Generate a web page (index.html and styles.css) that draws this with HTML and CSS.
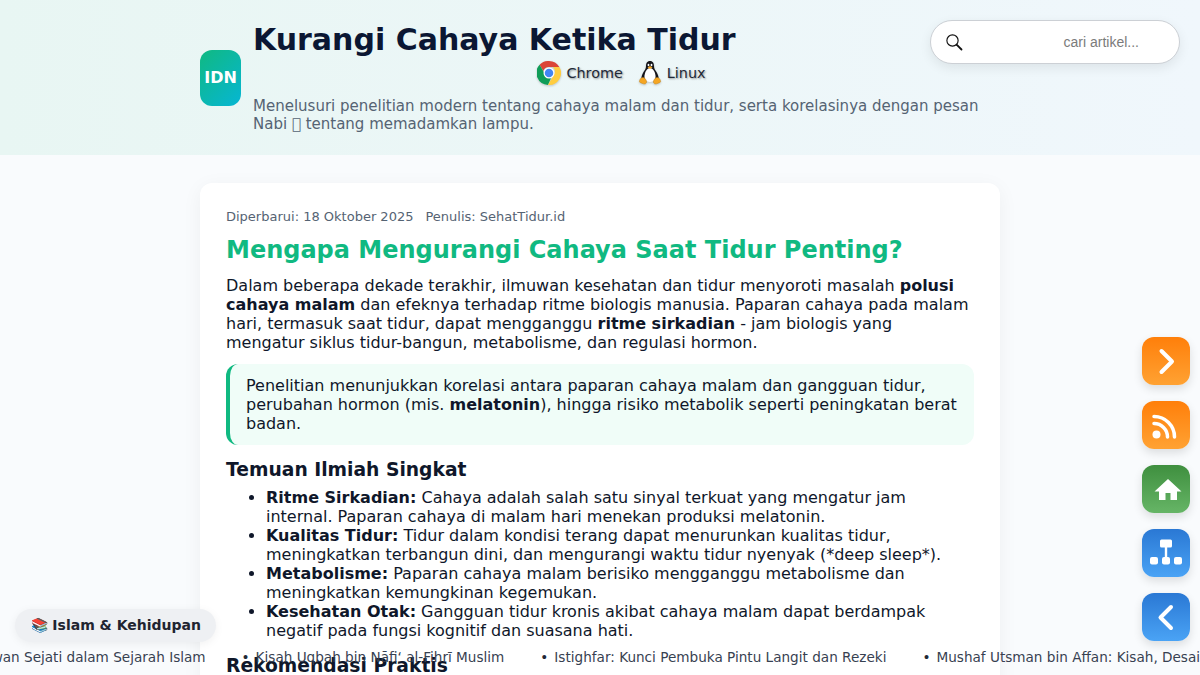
FILE: index.html
```html
<!DOCTYPE html>
<html lang="id">
<head>
<meta charset="utf-8">
<title>Kurangi Cahaya Ketika Tidur</title>
<link rel="stylesheet" href="styles.css">
</head>
<body>
<header class="site-header">
  <div class="header-inner">
    <div class="logo">IDN</div>
    <div class="brand">
      <h1>Kurangi Cahaya Ketika Tidur</h1>
      <div class="badges">
        <span class="badge">
          <svg class="badge-icon" viewBox="0 0 48 48" width="24" height="24">
            <path fill="#db4437" d="M24 0a24 24 0 0 1 20.800 12H24a12 12 0 0 0-11.400 8.200L5.200 7.600A24 24 0 0 1 24 0z"/>
            <path fill="#0f9d58" d="M5.200 7.600 16.400 27a9.600 9.600 0 0 0 12.600 4.500l-7 16.400A24 24 0 0 1 5.200 7.600z" />
            <path fill="#ffcd40" d="M44.800 12A24 24 0 0 1 22 47.900L33.400 28a12 12 0 0 0-1.400-16z"/>
            <circle cx="24" cy="24" r="11" fill="#fff"/>
            <circle cx="24" cy="24" r="8.500" fill="#4285f4"/>
          </svg>
          <span class="badge-label">Chrome</span>
        </span>
        <span class="badge">
          <svg class="badge-icon" viewBox="0 0 48 48" width="24" height="24">
            <path fill="#15151a" d="M24 0c-6 0-8 5-8 10 0 5-2 8-5 12-3 5-5 11-4 15h34c1-4-1-10-4-15-3-4-5-7-5-12 0-5-2-10-8-10z"/>
            <path fill="#fff" d="M24 14c-6 0-10 8-11 15-1 7 3 13 11 13s12-6 11-13c-1-7-5-15-11-15z"/>
            <ellipse cx="21" cy="8" rx="1.800" ry="2.400" fill="#fff"/>
            <ellipse cx="27" cy="8" rx="1.800" ry="2.400" fill="#fff"/>
            <path fill="#f5a623" d="M24 10l5 3-5 3-5-3z"/>
            <path fill="#f5a623" stroke="#b87a10" stroke-width=".8" d="M9 33c3-1 6 2 8 7 1 3-1 6-4 6-3 0-6-2-9-3-2-1-1-3-.5-5 .5-2 2-4 5.500-5zM39 33c-3-1-6 2-8 7-1 3 1 6 4 6 3 0 6-2 9-3 2-1 1-3 .5-5-.5-2-2-4-5.500-5z"/>
          </svg>
          <span class="badge-label">Linux</span>
        </span>
      </div>
      <p class="tagline">Menelusuri penelitian modern tentang cahaya malam dan tidur, serta korelasinya dengan pesan Nabi &#xE000; tentang memadamkan lampu.</p>
    </div>
  </div>
</header>

<div class="search">
  <svg viewBox="0 0 24 24" width="18" height="18" class="search-icon">
    <circle cx="10" cy="10" r="7.500" fill="none" stroke="#111" stroke-width="1.500"/>
    <path d="M15.500 15.500 22 22" stroke="#111" stroke-width="2.400" stroke-linecap="round"/>
  </svg>
  <span class="search-text">cari artikel...</span>
</div>

<main class="page">
  <article class="card">
    <div class="meta"><span>Diperbarui: 18 Oktober 2025</span><span>Penulis: SehatTidur.id</span></div>
    <h2>Mengapa Mengurangi Cahaya Saat Tidur Penting?</h2>
    <p>Dalam beberapa dekade terakhir, ilmuwan kesehatan dan tidur menyoroti masalah <strong>polusi cahaya malam</strong> dan efeknya terhadap ritme biologis manusia. Paparan cahaya pada malam hari, termasuk saat tidur, dapat mengganggu <strong>ritme sirkadian</strong> - jam biologis yang mengatur siklus tidur-bangun, metabolisme, dan regulasi hormon.</p>
    <blockquote>Penelitian menunjukkan korelasi antara paparan cahaya malam dan gangguan tidur, perubahan hormon (mis. <strong>melatonin</strong>), hingga risiko metabolik seperti peningkatan berat badan.</blockquote>
    <h3>Temuan Ilmiah Singkat</h3>
    <ul>
      <li><strong>Ritme Sirkadian:</strong> Cahaya adalah salah satu sinyal terkuat yang mengatur jam internal. Paparan cahaya di malam hari menekan produksi melatonin.</li>
      <li><strong>Kualitas Tidur:</strong> Tidur dalam kondisi terang dapat menurunkan kualitas tidur, meningkatkan terbangun dini, dan mengurangi waktu tidur nyenyak (*deep sleep*).</li>
      <li><strong>Metabolisme:</strong> Paparan cahaya malam berisiko mengganggu metabolisme dan meningkatkan kemungkinan kegemukan.</li>
      <li><strong>Kesehatan Otak:</strong> Gangguan tidur kronis akibat cahaya malam dapat berdampak negatif pada fungsi kognitif dan suasana hati.</li>
    </ul>
    <h3 class="next-heading">Rekomendasi Praktis</h3>
  </article>
</main>

<nav class="side-nav">
  <a class="side-btn orange"><svg viewBox="0 0 48 48" width="48" height="48"><path d="M19.500 14 30 24.500 19.500 35" fill="none" stroke="#fff" stroke-width="4" stroke-linecap="round" stroke-linejoin="round"/></svg></a>
  <a class="side-btn orange"><svg viewBox="0 0 48 48" width="48" height="48"><circle cx="14.500" cy="33.500" r="4" fill="#fff"/><path d="M12 22.500A13.500 13.500 0 0 1 25.500 36M12 15.500A20.500 20.500 0 0 1 32.500 36" fill="none" stroke="#fff" stroke-width="3.500" stroke-linecap="round"/></svg></a>
  <a class="side-btn green"><svg viewBox="0 0 48 48" width="48" height="48"><path fill="#fff" d="M26 14 12.500 26.500H17V35h6.500v-7h5v7H35v-8.500h4.500z"/></svg></a>
  <a class="side-btn blue"><svg viewBox="0 0 48 48" width="48" height="48"><rect x="18" y="10.500" width="12" height="8" rx="1.500" fill="#fff"/><rect x="22.800" y="18" width="2.400" height="10" fill="#fff"/><rect x="8" y="28" width="8" height="7.500" rx="2" fill="#fff"/><rect x="20" y="28" width="8" height="7.500" rx="2" fill="#fff"/><rect x="32" y="28" width="8" height="7.500" rx="2" fill="#fff"/></svg></a>
  <a class="side-btn blue"><svg viewBox="0 0 48 48" width="48" height="48"><path d="M29 14 18.500 24.500 29 35" fill="none" stroke="#fff" stroke-width="4" stroke-linecap="round" stroke-linejoin="round"/></svg></a>
</nav>

<div class="pill">📚 Islam &amp; Kehidupan</div>

<div class="ticker">
  <div class="ticker-track">
    <span class="ticker-item first">Pahlawan Sejati dalam Sejarah Islam</span>
    <span class="ticker-item">Kisah Uqbah bin Nāfi‘ al-Fihrī Muslim</span>
    <span class="ticker-item">Istighfar: Kunci Pembuka Pintu Langit dan Rezeki</span>
    <span class="ticker-item">Mushaf Utsman bin Affan: Kisah, Desain, dan Warisan</span>
  </div>
</div>
</body>
</html>
```
FILE: styles.css
```css
* { box-sizing: border-box; }
html, body { margin: 0; height: 675px; overflow: hidden; }
body {
  font-family: "DejaVu Sans", sans-serif;
  background: #f9fbfd;
  color: #0f172a;
  font-size: 16px;
  line-height: 19px;
}
.site-header {
  height: 155px;
  background: linear-gradient(90deg, #e8f6f3, #f0f7fc);
  padding-top: 21px;
}
.header-inner {
  width: 800px;
  margin: 0 auto;
  display: flex;
  align-items: center;
  gap: 12px;
}
.logo {
  flex: 0 0 41px;
  height: 56px;
  padding-bottom: 2px;
  border-radius: 12px;
  background: linear-gradient(135deg, #10b981, #06b6d4);
  color: #fff;
  font-weight: 700;
  font-size: 16px;
  display: flex;
  align-items: center;
  justify-content: center;
}
.brand { flex: 1; min-width: 0; padding-bottom: 2px; }
h1 {
  margin: 0;
  font-size: 30px;
  line-height: 38px;
  color: #0b1733;
  font-weight: 700;
}
.badges {
  display: flex;
  justify-content: center;
  gap: 15px;
  margin-top: 2px;
  height: 24px;
  padding-right: 10px;
}
.badge { display: flex; align-items: center; gap: 5px; font-size: 14.4px; }
.badge-icon { filter: drop-shadow(0 1px 1px rgba(0,0,0,.2)); }
.badge-label { color: #1f2937; text-shadow: 1px 1px 2px rgba(0,0,0,.4); }
.tagline {
  margin: 12px 0 0;
  color: #556373;
  font-size: 15px;
  line-height: 18px;
}
.search {
  position: absolute;
  left: 930px;
  top: 20px;
  width: 250px;
  height: 44px;
  background: #fff;
  border: 1px solid #ccd0d5;
  border-radius: 22px;
  box-shadow: 0 4px 12px rgba(0,0,0,.08);
  display: flex;
  align-items: center;
  padding: 0 40px 0 14px;
  justify-content: space-between;
}
.search-text {
  font-family: "Liberation Sans", sans-serif;
  font-size: 14px;
  color: #7b7b7b;
}
.page { padding-top: 28px; }
.card {
  width: 800px;
  margin: 0 auto;
  background: #fff;
  border-radius: 12px;
  padding: 26px;
  box-shadow: 0 4px 20px rgba(15,23,42,.05);
}
.meta { display: flex; gap: 12px; font-size: 13px; line-height: 15px; color: #556373; }
h2 {
  margin: 12px 0 0;
  font-size: 24px;
  line-height: 28px;
  color: #10b981;
  font-weight: 700;
}
p { margin: 0; }
.card > p { margin-top: 12px; }
blockquote {
  margin: 12px 0 0;
  padding: 12px 16px;
  background: #f0fdf8;
  border-left: 4px solid #10b981;
  border-radius: 12px;
}
h3 {
  margin: 13px 0 0;
  font-size: 18.72px;
  line-height: 23px;
  font-weight: 700;
}
ul { margin: 7px 0 0; padding-left: 40px; }
.next-heading { margin-top: 14px; }
.side-nav {
  position: absolute;
  left: 1142px;
  top: 337px;
  display: flex;
  flex-direction: column;
  gap: 16px;
}
.side-btn {
  width: 48px;
  height: 48px;
  border-radius: 12px;
  display: block;
  box-shadow: 0 4px 10px rgba(0,0,0,.12);
}
.side-btn svg { display: block; }
.orange { background: linear-gradient(180deg, #ff7f0a, #ffa233); }
.green { background: linear-gradient(180deg, #3f8f3f, #66b566); }
.blue { background: linear-gradient(180deg, #2a78d4, #4aa3f5); }
.pill {
  position: absolute;
  left: 15px;
  top: 609px;
  height: 33px;
  padding: 0 14.5px 0 15.5px;
  display: flex;
  align-items: center;
  border-radius: 17px;
  background: #eef0f3;
  box-shadow: 0 2px 10px rgba(0,0,0,.06);
  font-size: 14px;
  font-weight: 700;
  color: #1f2430;
  white-space: pre;
}
.ticker {
  position: absolute;
  left: 0;
  top: 647px;
  width: 1200px;
  overflow: hidden;
  font-size: 13.6px;
  line-height: 20px;
  color: #374151;
}
.ticker-track {
  display: flex;
  white-space: nowrap;
  gap: 36px;
  transform: translateX(-45px);
  width: max-content;
}
.ticker-item::before { content: "•"; margin-right: 6px; color: #1f2937; }
.ticker-item.first::before { content: none; }
```
